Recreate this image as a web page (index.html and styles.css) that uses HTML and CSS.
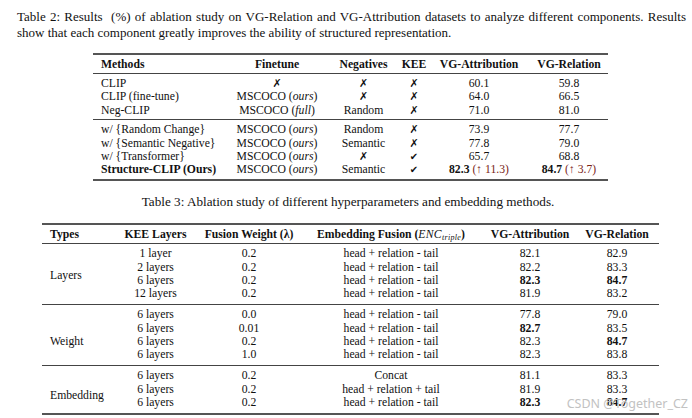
FILE: index.html
```html
<!DOCTYPE html>
<html>
<head>
<meta charset="utf-8">
<link rel="stylesheet" href="styles.css">
</head>
<body>
<div class="page">
  <p class="cap2">
    <span class="l1">Table 2: Results &nbsp;(%) of ablation study on VG-Relation and VG-Attribution datasets to analyze different components. Results</span>
    <span class="l2">show that each component greatly improves the ability of structured representation.</span>
  </p>

  <table class="t2">
    <colgroup>
      <col class="c1"><col class="c2"><col class="c3"><col class="c4"><col class="c5"><col class="c6">
    </colgroup>
    <thead>
      <tr><th class="left">Methods</th><th>Finetune</th><th>Negatives</th><th>KEE</th><th>VG-Attribution</th><th>VG-Relation</th></tr>
    </thead>
    <tbody>
      <tr class="first"><td class="left">CLIP</td><td><span class="x">✗</span></td><td><span class="x">✗</span></td><td><span class="x">✗</span></td><td>60.1</td><td>59.8</td></tr>
      <tr><td class="left">CLIP (fine-tune)</td><td>MSCOCO (<i>ours</i>)</td><td><span class="x">✗</span></td><td><span class="x">✗</span></td><td>64.0</td><td>66.5</td></tr>
      <tr class="last"><td class="left">Neg-CLIP</td><td>MSCOCO (<i>full</i>)</td><td>Random</td><td><span class="x">✗</span></td><td>71.0</td><td>81.0</td></tr>
    </tbody>
    <tbody>
      <tr class="first"><td class="left">w/ {Random Change}</td><td>MSCOCO (<i>ours</i>)</td><td>Random</td><td><span class="x">✗</span></td><td>73.9</td><td>77.7</td></tr>
      <tr><td class="left">w/ {Semantic Negative}</td><td>MSCOCO (<i>ours</i>)</td><td>Semantic</td><td><span class="x">✗</span></td><td>77.8</td><td>79.0</td></tr>
      <tr><td class="left">w/ {Transformer}</td><td>MSCOCO (<i>ours</i>)</td><td><span class="x">✗</span></td><td><span class="x chk">✔</span></td><td>65.7</td><td>68.8</td></tr>
      <tr class="last"><td class="left"><b>Structure-CLIP (Ours)</b></td><td>MSCOCO (<i>ours</i>)</td><td>Semantic</td><td><span class="x chk">✔</span></td><td><b>82.3</b> <span class="gain">(↑ 11.3)</span></td><td><b>84.7</b> <span class="gain">(↑ 3.7)</span></td></tr>
    </tbody>
  </table>

  <p class="cap3">Table 3: Ablation study of different hyperparameters and embedding methods.</p>

  <table class="t3">
    <colgroup>
      <col class="d1"><col class="d2"><col class="d3"><col class="d4"><col class="d5"><col class="d6">
    </colgroup>
    <thead>
      <tr><th class="left">Types</th><th>KEE Layers</th><th>Fusion Weight (λ)</th><th>Embedding Fusion (<i class="math">ENC<sub>triple</sub></i>)</th><th>VG-Attribution</th><th>VG-Relation</th></tr>
    </thead>
    <tbody>
      <tr class="first"><td class="left" rowspan="4">Layers</td><td>1 layer</td><td>0.2</td><td>head + relation - tail</td><td>82.1</td><td>82.9</td></tr>
      <tr><td>2 layers</td><td>0.2</td><td>head + relation - tail</td><td>82.2</td><td>83.3</td></tr>
      <tr><td>6 layers</td><td>0.2</td><td>head + relation - tail</td><td><b>82.3</b></td><td><b>84.7</b></td></tr>
      <tr class="last"><td>12 layers</td><td>0.2</td><td>head + relation - tail</td><td>81.9</td><td>83.2</td></tr>
    </tbody>
    <tbody>
      <tr class="first"><td class="left shift-w" rowspan="4">Weight</td><td>6 layers</td><td>0.0</td><td>head + relation - tail</td><td>77.8</td><td>79.0</td></tr>
      <tr><td>6 layers</td><td>0.01</td><td>head + relation - tail</td><td><b>82.7</b></td><td>83.5</td></tr>
      <tr><td>6 layers</td><td>0.2</td><td>head + relation - tail</td><td>82.3</td><td><b>84.7</b></td></tr>
      <tr class="last"><td>6 layers</td><td>1.0</td><td>head + relation - tail</td><td>82.3</td><td>83.8</td></tr>
    </tbody>
    <tbody>
      <tr class="first"><td class="left shift-e" rowspan="3">Embedding</td><td>6 layers</td><td>0.2</td><td>Concat</td><td>81.1</td><td>83.3</td></tr>
      <tr><td>6 layers</td><td>0.2</td><td>head + relation + tail</td><td>81.9</td><td>83.3</td></tr>
      <tr class="last"><td>6 layers</td><td>0.2</td><td>head + relation - tail</td><td><b>82.3</b></td><td><b>84.7</b></td></tr>
    </tbody>
  </table>

  <div class="watermark">CSDN @Together_CZ</div>
</div>
</body>
</html>
```

FILE: styles.css
```css
* { box-sizing: border-box; }

html, body {
  margin: 0;
  padding: 0;
  background: #ffffff;
}

.page {
  position: relative;
  width: 692px;
  height: 418px;
  overflow: hidden;
  font-family: "Liberation Serif", "Times New Roman", serif;
  color: #111;
}

.cap2 {
  margin: 0;
  padding: 9px 6px 0 17px;
  font-size: 13px;
  line-height: 16px;
}

.cap2 .l1 {
  display: block;
  text-align: justify;
  text-align-last: justify;
}

.cap2 .l2 {
  display: block;
}

table {
  border-collapse: collapse;
  table-layout: fixed;
  font-size: 11.7px;
}

th, td {
  padding: 0;
  text-align: center;
  white-space: nowrap;
  font-weight: normal;
}

th {
  font-weight: bold;
}

.left {
  text-align: left;
  padding-left: 8px;
}

thead {
  border-top: 2px solid #555;
  border-bottom: 1px solid #444;
}

tbody {
  border-bottom: 1px solid #444;
}

tbody:last-of-type {
  border-bottom: 2px solid #555;
}

.x {
  font-family: "DejaVu Sans", sans-serif;
  font-size: 11px;
  font-weight: bold;
}

.x.chk {
  font-size: 10px;
}

.gain {
  color: #7a2418;
}

/* Table 2 */
.t2 {
  margin: 12px 0 0 93px;
  width: 515px;
}

.t2 .c1 { width: 134px; }
.t2 .c2 { width: 100px; }
.t2 .c3 { width: 73px; }
.t2 .c4 { width: 28px; }
.t2 .c5 { width: 102px; }
.t2 .c6 { width: 78px; }

.t2 th {
  line-height: 13px;
  padding-top: 3px;
  padding-bottom: 2px;
}

.t2 td {
  line-height: 13.4px;
}

.t2 tr.first td { padding-top: 3px; }
.t2 tr.last td { padding-bottom: 2px; }

.cap3 {
  margin: 13px 0 0 0;
  padding-left: 4px;
  text-align: center;
  font-size: 13.2px;
  line-height: 16px;
}

/* Table 3 */
.t3 {
  margin: 13px 0 0 42px;
  width: 617px;
}

.t3 .d1 { width: 68px; }
.t3 .d2 { width: 91px; }
.t3 .d3 { width: 96px; }
.t3 .d4 { width: 188px; }
.t3 .d5 { width: 90px; }
.t3 .d6 { width: 84px; }

.t3 th {
  line-height: 13px;
  padding-top: 3.5px;
  padding-bottom: 1.5px;
}

.t3 td {
  line-height: 13.25px;
  vertical-align: middle;
}

.t3 tr.first td { padding-top: 3.5px; }
.t3 tr.last td { padding-bottom: 3.5px; }

.t3 tr.first td.shift-w {
  vertical-align: top;
  padding-top: 30px;
}

.t3 tr.first td.shift-e {
  vertical-align: top;
  padding-top: 23px;
}

.math {
  font-weight: normal;
  font-style: italic;
  letter-spacing: 0.3px;
}

.math sub {
  font-size: 8px;
  vertical-align: -2px;
  line-height: 0;
}

.watermark {
  position: absolute;
  right: 4px;
  bottom: 6px;
  font-family: "Noto Sans", sans-serif;
  font-size: 12.5px;
  line-height: 16px;
  color: #c2c2c2;
}
```
